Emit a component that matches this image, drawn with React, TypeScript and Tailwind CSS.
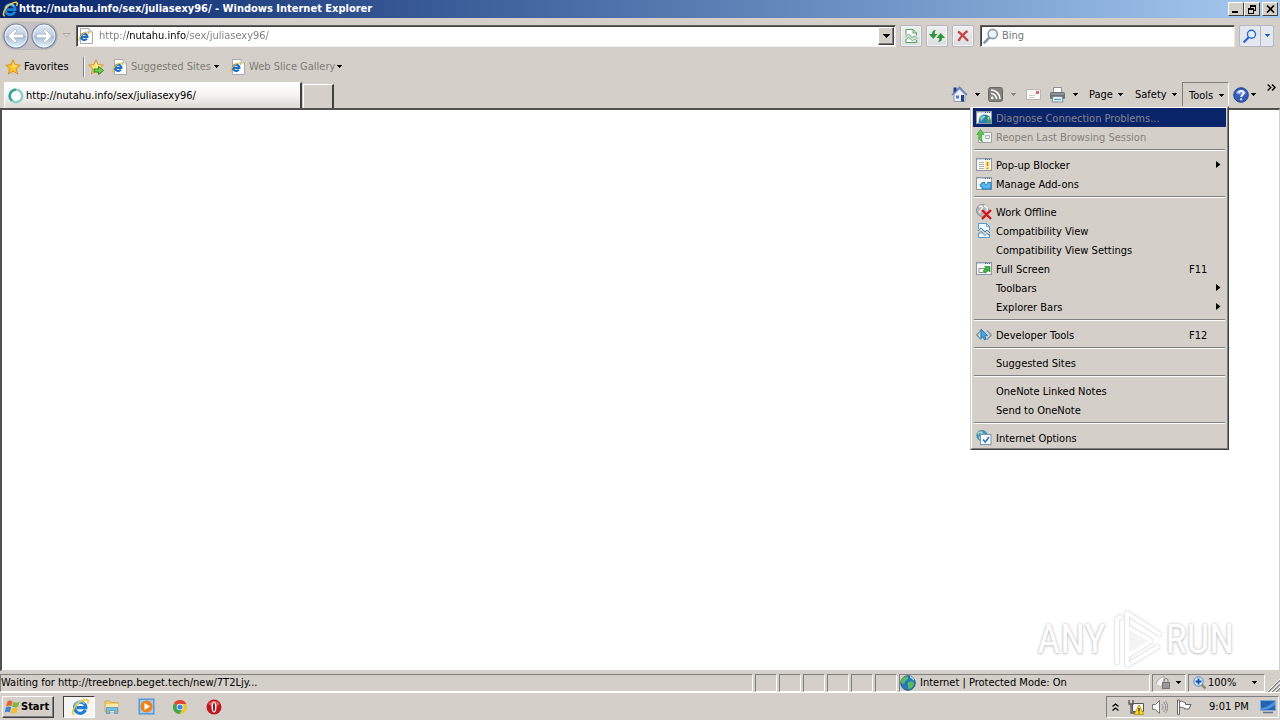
import React from "react";

type P = { children?: React.ReactNode };

const Caret = ({ color = "#000" }: { color?: string }) => (
  <svg width="5" height="3" viewBox="0 0 5 3" className="shrink-0" shapeRendering="crispEdges">
    <path d="M0 0h5v1H4v1H3v1H2V2H1V1H0z" fill={color} />
  </svg>
);

const IeGlyph = ({ size = 16 }: { size?: number }) => (
  <svg width={size} height={size} viewBox="0 0 16 16" className="shrink-0">
    <path d="M12.8 10.6A5 5 0 1 1 13.200 8.600H5" fill="none" stroke="#1d7fd6" strokeWidth="2.800" />
    <path d="M12.200 5.200A5 5 0 0 0 3.400 7" fill="none" stroke="#7fcdf8" strokeWidth="1.300" />
    <path d="M2.800 15C-.2 14 2.200 8.500 6 5S14.600.4 15.200 2.200c.2.800-.2 1.900-.6 2.800" fill="none" stroke="#f3c93c" strokeWidth="1.500" />
  </svg>
);

const IePage = () => (
  <svg width="16" height="16" viewBox="0 0 16 16" className="shrink-0">
    <path d="M2.500.5h8.500l3.500 3.500v11.500h-12z" fill="#fff" stroke="#a8a8a8" />
    <path d="M11 .5V4h3.500" fill="#e6e6e6" stroke="#b0b0b0" />
    <path d="M8.800 10.700A3.200 3.200 0 1 1 9.400 8.900H3" fill="none" stroke="#1d6fc4" strokeWidth="2.200" />
    <path d="M1.200 13C-.2 11.500 3 6.500 6.500 4.800s4.500-.6 4 1.200" fill="none" stroke="#e8b92e" strokeWidth="1.100" />
  </svg>
);

const Star = ({ add = false }: { add?: boolean }) => (
  <svg width="16" height="16" viewBox="0 0 16 16" className="shrink-0">
    <path d="M8 .8l2.100 4.900 5.200.5-3.900 3.500 1.200 5.300L8 12.200 3.400 15l1.200-5.300L.7 6.200l5.200-.5z" fill={add ? "#fbe27a" : "#fdc62c"} stroke="#d98a12" strokeWidth=".9" />
    <path d="M8 3l1.300 3.500 3 .3L8 8.500z" fill="#fff1a8" />
    {add && <path d="M6 10h4.500V7.500L15.500 11.500l-5 4V13H6z" fill="#6cd04e" stroke="#23841b" strokeWidth=".9" />}
  </svg>
);

const NavCircle = ({ flip = false }: { flip?: boolean }) => (
  <svg width="26" height="26" viewBox="0 0 26 26" className={flip ? "-scale-x-100" : ""}>
    <defs>
      <linearGradient id={flip ? "nf" : "nb"} x1="0" y1="0" x2="0" y2="1">
        <stop offset="0" stopColor="#e4e9f2" />
        <stop offset=".48" stopColor="#c2cfe2" />
        <stop offset=".52" stopColor="#a9bad6" />
        <stop offset="1" stopColor="#e6f8fe" />
      </linearGradient>
    </defs>
    <circle cx="13" cy="13" r="12" fill={flip ? "url(#nf)" : "url(#nb)"} stroke="#7788a4" strokeWidth="1.200" />
    <circle cx="13" cy="13" r="10.800" fill="none" stroke="#fff" strokeOpacity=".7" />
    <path d="M5 13l7-7 2 2-3 3.200H20.500v3.600H11l3 3.200-2 2z" fill="#fff" stroke="#95a5c2" strokeWidth=".6" />
  </svg>
);

const Windowed = ({ children }: P) => (
  <svg width="16" height="16" viewBox="0 1 16 16">
    <rect x=".5" y="2.500" width="15" height="12" fill="#f8f8f4" stroke="#8b98a8" />
    <path d="M1 3.500h14" stroke="#c8d2dc" />
    <path d="M9 3.500h1M11 3.500h1M13 3.500h1" stroke="#506480" />
    {children}
  </svg>
);

const menuIcons: Record<string, React.ReactNode> = {
  diagnose: (
    <Windowed>
      <path d="M2.500 14C2.500 8 5 5.500 9 5.500S15 9 15 14z" fill="#2f7fbe" />
      <path d="M4 9c2-3 4-3 5-2s-1 2-2 3-1 2-2 2z" fill="#7fd0b0" />
      <path d="M11 7.500h3v6.500h-3z" fill="#3da24a" />
      <path d="M12.500 8v2.500" stroke="#b8eb8a" strokeWidth="1.200" />
    </Windowed>
  ),
  reopen: (
    <svg width="16" height="16" viewBox="0 0 16 16">
      <path d="M6.500 3.500h9v10h-13v-5" fill="#f3f3ef" stroke="#9ca3a5" />
      <path d="M9.500 6.500h4v3h-4z" fill="none" stroke="#a7b8b9" />
      <path d="M6.500 12.500C3 11.500 2.700 9 3 5.500H1L4.500.5 8 5.500H5.700C5.500 9 5 10.500 6.500 12.500z" fill="#5ec850" stroke="#2c9b28" strokeWidth=".7" />
    </svg>
  ),
  popup: (
    <Windowed>
      <path d="M3 6.500h5M3 8.500h5M3 10.500h5M3 12.500h5" stroke="#b3b3b3" />
      <rect x="9" y="5" width="5" height="9" fill="#ffedb0" />
      <path d="M11.500 6v4M11.500 11.500v1.500" stroke="#d28b00" strokeWidth="1.600" />
    </Windowed>
  ),
  addons: (
    <Windowed>
      <path d="M6 14v-2.500c-2.500 1-2.500-3.500 0-2.500V7.500h3c-1 3 3 3 2.500 0H15V14z" fill="#58b9f0" stroke="#1874bc" strokeWidth=".9" />
    </Windowed>
  ),
  offline: (
    <svg width="16" height="16" viewBox="0 0 16 16">
      <circle cx="6.500" cy="6.500" r="6" fill="#b4b7b8" stroke="#8a8e90" />
      <path d="M3 3c3-2 4 0 3 2s-3 1-2 4M8 2c3 0 4 3 3 5" fill="none" stroke="#eee" strokeWidth="1.800" />
      <path d="M6 6l9 9M15 6l-9 9" stroke="#d9151b" strokeWidth="2.400" />
    </svg>
  ),
  compat: (
    <svg width="16" height="16" viewBox="0 0 16 16">
      <path d="M2.500 6V.5h8l3 3v4M2.500 11v3.500h11V11" fill="#eef8ff" stroke="#4a93c8" strokeWidth=".9" />
      <path d="M10.500.5v3h3" fill="none" stroke="#4a93c8" strokeWidth=".8" />
      <path d="M2 8l3-3 4 4 2-2 3 3M2 11.500l3-3 4 4 2-2 3 2.500" fill="none" stroke="#3387c1" />
    </svg>
  ),
  full: (
    <Windowed>
      <rect x="3" y="8.500" width="6" height="4" fill="#fff" stroke="#777" strokeWidth=".8" />
      <path d="M7 11l3-3-1.500-1.500H14V12l-1.500-1.500-3 2.500z" fill="#3eb53b" stroke="#177b1b" strokeWidth=".6" />
    </Windowed>
  ),
  dev: (
    <svg width="16" height="16" viewBox="0 0 16 16">
      <path d="M5 3.500L.7 8 5 12.500M11 3.500l4.300 4.500L11 12.500" fill="none" stroke="#7895a6" strokeWidth="1.200" />
      <path d="M5 2l6.500 6.500-2.800.3 1.500 3.400-1.700.8L7 9.800 5 11.500z" fill="#3caae8" stroke="#1c6dac" strokeWidth=".8" />
    </svg>
  ),
  options: (
    <svg width="16" height="16" viewBox="0 0 16 16">
      <circle cx="6" cy="5.500" r="5.300" fill="#3f9bd0" stroke="#4c7894" strokeWidth=".6" />
      <path d="M2 4c2-3 4-2 4 0S3 6 4 9" fill="none" stroke="#a6dcb0" strokeWidth="1.800" />
      <rect x="4.500" y="4.500" width="10.500" height="10" fill="#f8fcff" stroke="#7b95aa" />
      <path d="M7 9.500l2.300 2.500L13 7" fill="none" stroke="#2377c8" strokeWidth="1.500" />
    </svg>
  ),
};

type Item = { label: string; icon?: string; key?: string; sub?: boolean; state?: "hot" | "off" };
const menu: Item[][] = [
  [
    { label: "Diagnose Connection Problems...", icon: "diagnose", state: "hot" },
    { label: "Reopen Last Browsing Session", icon: "reopen", state: "off" },
  ],
  [{ label: "Pop-up Blocker", icon: "popup", sub: true }, { label: "Manage Add-ons", icon: "addons" }],
  [
    { label: "Work Offline", icon: "offline" },
    { label: "Compatibility View", icon: "compat" },
    { label: "Compatibility View Settings" },
    { label: "Full Screen", icon: "full", key: "F11" },
    { label: "Toolbars", sub: true },
    { label: "Explorer Bars", sub: true },
  ],
  [{ label: "Developer Tools", icon: "dev", key: "F12" }],
  [{ label: "Suggested Sites" }],
  [{ label: "OneNote Linked Notes" }, { label: "Send to OneNote" }],
  [{ label: "Internet Options", icon: "options" }],
];

const itemTone = {
  hot: "bg-[#0a246a] text-[#85858c]",
  off: "text-[#85827c]",
  normal: "text-black",
};

const ToolsMenu = () => (
  <div role="menu" className="absolute top-full right-0 z-10 -mt-px w-[259px] border border-t-[#d4d0c8] border-r-[#404040] border-b-[#404040] border-l-[#d4d0c8] bg-[#d4cfc8]">
    <div className="border border-t-white border-r-[#808080] border-b-[#808080] border-l-white px-px pb-px">
      {menu.map((group, g) => (
        <div key={g}>
          {g > 0 && (
            <div role="separator" className="h-[9px] px-px pt-[3px]">
              <div className="h-px bg-[#808080]" />
              <div className="h-px bg-white" />
            </div>
          )}
          {group.map((it) => (
            <button key={it.label} role="menuitem" disabled={it.state !== undefined} className={`flex h-[19px] w-full items-center pr-1 pl-[3px] text-left ${itemTone[it.state ?? "normal"]}`}>
              <span className="w-5 shrink-0">{it.icon && menuIcons[it.icon]}</span>
              <span className="grow pt-[2px]">{it.label}</span>
              {it.key && <span className="w-[33px] pt-[2px]">{it.key}</span>}
              {it.sub && (
                <svg width="5" height="7" viewBox="0 0 5 7" className="mr-px">
                  <path d="M0 0l4.500 3.500L0 7z" />
                </svg>
              )}
            </button>
          ))}
        </div>
      ))}
    </div>
  </div>
);

const WinButton = ({ label, children }: { label: string } & P) => (
  <button aria-label={label} className="flex h-[14px] w-4 items-center justify-center border border-t-white border-r-[#404040] border-b-[#404040] border-l-white bg-[#d4d0c8]">
    {children}
  </button>
);

const SoftButton = ({ label, children }: { label: string } & P) => (
  <button aria-label={label} className="flex h-[22px] w-[22px] items-center justify-center rounded-xs border border-[#b4b8be] bg-linear-to-b from-[#eeeeee] to-[#dcdfe3] shadow-[inset_0_0_0_1px_#f4f4f4]">
    {children}
  </button>
);

const Pane = ({ className = "", children }: { className?: string } & P) => (
  <div className={`flex h-[18px] shrink-0 items-center border border-t-[#808080] border-r-white border-b-white border-l-[#808080] ${className}`}>{children}</div>
);

const Magnifier = ({ size, color, fill }: { size: number; color: string; fill: string }) => (
  <svg width={size} height={size} viewBox="0 0 16 16" className="shrink-0">
    <path d="M6.500 9.500L1.500 14.500" stroke={color} strokeWidth="2.600" strokeLinecap="round" />
    <circle cx="9.700" cy="6" r="4.600" fill={fill} stroke={color} strokeWidth="1.600" />
  </svg>
);

const Globe = () => (
  <svg width="16" height="16" viewBox="0 0 16 16" className="shrink-0">
    <circle cx="8" cy="8" r="7.300" fill="#2478bd" stroke="#315f7c" />
    <path d="M4 2c3-1 5 0 4 2S5 5 5 7s-2 2-3.500 1S2 3 4 2zM9 7c3-1 5 0 5 2s-3 5-5 5 0-3-1-4 0-3 1-3z" fill="#57bb5b" />
    <path d="M10 2c2 0 3 2 4 3" stroke="#b5e3fa" strokeWidth="1.400" fill="none" />
  </svg>
);

const TitleBar = () => (
  <header className="flex h-[18px] shrink-0 items-center gap-px bg-linear-to-r from-[#0a246a] to-[#a6caf0] pr-[2px] pl-[2px] text-white">
    <IeGlyph />
    <h1 className="grow text-[11px] font-bold">http://nutahu.info/sex/juliasexy96/ - Windows Internet Explorer</h1>
    <div className="flex">
      <WinButton label="Minimize">
        <svg width="10" height="9"><path d="M1 6h6v2H1z" /></svg>
      </WinButton>
      <WinButton label="Restore">
        <svg width="10" height="9" viewBox="0 0 10 9" shapeRendering="crispEdges"><path d="M3 0h6v6H7V5h1V2H4v1H3zM1 3h6v6H1zm1 2v3h4V5z" fillRule="evenodd" /></svg>
      </WinButton>
    </div>
    <div className="ml-px flex">
      <WinButton label="Close">
        <svg width="9" height="8" viewBox="0 0 9 8"><path d="M1 .5l7 7M8 .5l-7 7" stroke="#000" strokeWidth="1.700" /></svg>
      </WinButton>
    </div>
  </header>
);

const inset = "border border-t-[#606060] border-r-[#e8e6e2] border-b-[#f4f2ee] border-l-[#606060] shadow-[inset_1px_1px_0_#404040]";

const AddressRow = () => (
  <div className="flex h-[35px] shrink-0 items-center pr-[6px] pl-[3px]">
    <div className="flex rounded-full bg-[#c4c2c4] shadow-[0_0_0_1px_#bdb9b6]">
      <button aria-label="Back"><NavCircle /></button>
      <button aria-label="Forward" className="ml-[2px]"><NavCircle flip /></button>
    </div>
    <button aria-label="Recent pages" className="flex w-[19px] justify-center">
      <svg width="9" height="5" viewBox="0 0 9 5"><path d="M1 .5h7L4.500 4z" fill="#ddd8d1" stroke="#aaa69f" /></svg>
    </button>
    <div className={`flex h-[22px] grow items-center bg-white px-px ${inset}`}>
      <IePage />
      <input aria-label="Address" defaultValue="http://nutahu.info/sex/juliasexy96/" className="h-5 min-w-0 grow bg-[linear-gradient(90deg,#7c7c7c_33px,#000_33px,#000_92px,#7c7c7c_92px)] bg-clip-text pl-[5px] text-transparent outline-none" />
      <button aria-label="Show addresses" className="flex h-[18px] w-4 items-center justify-center border border-t-white border-r-[#404040] border-b-[#404040] border-l-white bg-[#d4d0c8] shadow-[inset_-1px_-1px_0_#808080]">
        <svg width="7" height="4" viewBox="0 0 7 4" shapeRendering="crispEdges"><path d="M0 0h7v1H6v1H5v1H4v1H3V3H2V2H1V1H0z" /></svg>
      </button>
    </div>
    <div className="mr-[6px] ml-1 flex gap-1">
      <SoftButton label="Compatibility View">
        <svg width="16" height="16" viewBox="0 0 16 16" className="shrink-0">
          <path d="M3 6.500V1.500h7l3.500 3.500v2.500M3 11.500v3h10.500V12" fill="#fff" stroke="#4ba456" />
          <path d="M10 1.500V5h3.500" fill="none" stroke="#4ba456" />
          <path d="M2.500 9l3-3 4 4L11.500 8l3 3M2.500 12l3-3 4 4 2-2 2.500 2.500" fill="none" stroke="#5cae66" />
        </svg>
      </SoftButton>
      <SoftButton label="Refresh">
        <svg width="18" height="16" viewBox="0 0 18 16" className="shrink-0">
          <path d="M8 2C5 2 4 3.500 4 6H1l4.300 5L9.500 6H6.700c0-1.700.3-3 1.300-4z" fill="#2f9438" />
          <path d="M10 14c3 0 4-1.500 4-4h3l-4.300-5L8.500 10h2.800c0 1.700-.3 3-1.300 4z" fill="#2f9438" />
        </svg>
      </SoftButton>
      <SoftButton label="Stop">
        <svg width="14" height="14" viewBox="0 0 14 14"><path d="M2 2.500c3 2 7 6 10 9.500M11.500 2C8 4.500 4.500 8 2.500 12" fill="none" stroke="#cb4545" strokeWidth="2.200" /></svg>
      </SoftButton>
    </div>
    <div className={`flex h-[22px] w-[255px] items-center bg-white pl-[2px] ${inset}`}>
      <Magnifier size={16} color="#8797ad" fill="#e9f4fb" />
      <input aria-label="Search" placeholder="Bing" className="h-5 min-w-0 grow pl-[3px] outline-none placeholder:text-[#777]" />
    </div>
    <div className="ml-1 flex h-[22px] rounded-xs border border-[#b4b8c4] bg-[#e4e7ed]">
      <button aria-label="Search the web" className="flex w-5 items-center justify-center"><Magnifier size={14} color="#2b67cf" fill="#e2f0ff" /></button>
      <button aria-label="Search options" className="flex w-[13px] items-center justify-center border-l border-[#b4b8c4]"><Caret color="#2460bd" /></button>
    </div>
  </div>
);

const FavoritesRow = () => (
  <div className="flex h-[27px] shrink-0 items-center pl-[5px]">
    <button className="flex w-[78px] items-center gap-[3px]"><Star />Favorites</button>
    <div className="h-5 w-[2px] border-l border-[#808080] bg-white" />
    <button aria-label="Add to Favorites Bar" className="ml-[3px]"><Star add /></button>
    <button className="ml-2 flex w-[118px] items-center text-[#7e7b76]">
      <IePage /><span className="w-[86px] pl-[3px] text-left">Suggested Sites</span><Caret />
    </button>
    <button className="flex items-center text-[#7e7b76]">
      <IePage /><span className="w-[91px] pl-[3px] text-left">Web Slice Gallery</span><Caret />
    </button>
  </div>
);

const House = () => (
  <svg width="17" height="17" viewBox="0 0 17 17">
    <path d="M3 8.500v7h11v-7L8.500 3z" fill="#edf2fa" stroke="#8d9ab4" />
    <path d="M1 9l7.500-7.500L16 9" fill="none" stroke="#6a80b4" strokeWidth="1.600" />
    <path d="M2.500 1.500h3v3l-3 2.500z" fill="#203a86" />
    <rect x="5" y="9.500" width="3" height="3" fill="#4a7ecb" /><rect x="10" y="9" width="3" height="6.500" fill="#25428b" />
  </svg>
);
const Rss = () => (
  <svg width="15" height="15" viewBox="0 0 15 15">
    <rect x=".5" y=".5" width="14" height="14" rx="2" fill="#85827e" stroke="#6c6965" />
    <circle cx="4.200" cy="10.900" r="1.300" fill="#fff" />
    <path d="M3 6.500a5.500 5.500 0 0 1 5.500 5.500M3 3a9 9 0 0 1 9 9" fill="none" stroke="#fff" strokeWidth="1.500" />
  </svg>
);
const Mail = () => (
  <svg width="15" height="11" viewBox="0 0 15 11">
    <rect x=".5" y=".5" width="14" height="10" fill="#faf8f7" stroke="#bdb6b4" />
    <rect x="10" y="2" width="3" height="3" fill="#d8646c" /><path d="M3 6.500h6M3 8.500h5" stroke="#cfcac8" />
  </svg>
);
const Printer = () => (
  <svg width="17" height="16" viewBox="0 0 17 16">
    <path d="M4.500 6V.5h8V6" fill="#fff" stroke="#8b8f95" />
    <rect x="1" y="5" width="15" height="7" rx="1.500" fill="#6d7075" /><path d="M2 7h13" stroke="#aeb1b5" />
    <path d="M4 9.500h9l1 5.500H3z" fill="#f2f7fb" stroke="#7a8c9b" /><path d="M5 12.500h7" stroke="#57a4d4" strokeWidth="1.500" />
  </svg>
);
const Help = () => (
  <svg width="16" height="16" viewBox="0 0 16 16">
    <circle cx="8" cy="8" r="7.300" fill="#345db7" stroke="#24458d" />
    <path d="M2.500 6a6 5 0 0 1 11 0C10 8 6 8 2.500 6z" fill="#7e9fe0" />
    <path d="M5.500 6.200c0-3.200 5.200-3 5.200 0C10.700 8 8.200 8 8.200 10M8.200 11.300v1.900" fill="none" stroke="#fff" strokeWidth="1.800" />
  </svg>
);

const TabRow = () => (
  <div className="flex h-[28px] shrink-0 justify-between pl-1">
    <div className="flex items-end gap-px">
      <button role="tab" aria-selected="true" className="flex h-[26px] w-[298px] items-center border-t border-r-2 border-l border-t-white border-r-[#404040] border-l-white bg-linear-to-b from-white via-[#f4f3f1] to-[#dedad4] pt-px pl-[3px]">
        <svg width="16" height="16" viewBox="0 0 16 16" className="mr-[2px]">
          <circle cx="8" cy="8" r="6.200" fill="#fff" stroke="#8fd0c6" strokeWidth="2.600" />
          <path d="M8 1.800A6.200 6.200 0 0 0 4 12.800" fill="none" stroke="#3ba698" strokeWidth="2.600" />
        </svg>
        http://nutahu.info/sex/juliasexy96/
      </button>
      <button aria-label="New Tab" className="h-[24px] w-[31px] border-t border-r-2 border-l border-t-white border-r-[#404040] border-l-white" />
    </div>
    <div className="flex h-[26px] items-center self-end pb-px">
      <button aria-label="Home" className="flex w-[37px] items-center gap-[7px]"><House /><Caret /></button>
      <button aria-label="Feeds" disabled className="flex w-[38px] items-center gap-2"><Rss /><Caret color="#8c8882" /></button>
      <button aria-label="Read mail" className="w-[23px]"><Mail /></button>
      <button aria-label="Print" className="flex w-10 items-center gap-[7px]"><Printer /><Caret /></button>
      <button className="flex w-[46px] items-center"><span className="w-[29px] text-left">Page</span><Caret /></button>
      <button className="flex w-[47px] items-center"><span className="w-[37px] text-left">Safety</span><Caret /></button>
      <div className="relative">
        <button aria-haspopup="menu" aria-expanded="true" className="flex h-[25px] w-[47px] items-center border border-t-[#808080] border-r-white border-b-transparent border-l-[#808080] pt-[2px] pl-[6px]"><span className="w-[30px] text-left">Tools</span><Caret /></button>
        <ToolsMenu />
      </div>
      <button aria-label="Help" className="ml-1 flex w-[34px] items-center gap-[2px]"><Help /><Caret /></button>
      <button aria-label="More commands" className="self-start pt-[2px] pr-1">
        <svg width="9" height="7" viewBox="0 0 9 7"><path d="M.7.5l3 3-3 3M5 .5l3 3-3 3" fill="none" stroke="#000" strokeWidth="1.400" /></svg>
      </button>
    </div>
  </div>
);

const StatusBar = () => (
  <footer className="flex h-[22px] shrink-0 items-center gap-[2px] border-b border-white pt-[2px]">
    <Pane className="grow">Waiting for http://treebnep.beget.tech/new/7T2Ljy...</Pane>
    {[0, 1, 2, 3, 4, 5].map((n) => <Pane key={n} className="w-[22px]" />)}
    <Pane className="w-[251px] gap-1"><Globe />Internet | Protected Mode: On</Pane>
    <Pane className="w-[34px] gap-[5px] pl-[2px]">
      <svg width="16" height="15" viewBox="0 0 16 15">
        <path d="M1 9C2 5 5 3 9 1v9l-3 1" fill="#f1f1f1" stroke="#aaa" />
        <rect x="7.500" y="7.500" width="7" height="6" fill="#999" stroke="#777" /><path d="M9 7V5.500a2 2 0 0 1 4 0V7" fill="none" stroke="#888" />
      </svg>
      <Caret />
    </Pane>
    <Pane className="w-[77px] pl-1">
      <svg width="14" height="14" viewBox="0 0 14 14" className="mr-px">
        <path d="M8.500 8.500l4 4" stroke="#8b8074" strokeWidth="2.400" />
        <circle cx="5.500" cy="5.500" r="4.700" fill="#d7edfc" stroke="#4d83bf" /><path d="M5.500 2.500v6M2.500 5.500h6" stroke="#1553a8" strokeWidth="1.800" />
      </svg>
      <span className="w-11">100%</span><Caret />
    </Pane>
    <svg width="13" height="14" viewBox="0 0 13 14" className="self-end">
      <path d="M1 14L13 2M5 14l8-8M9 14l4-4" stroke="#808080" strokeWidth="1.500" /><path d="M0 14L13 1M4 14l9-9M8 14l5-5" stroke="#fff" />
    </svg>
  </footer>
);

const Taskbar = () => (
  <nav className="flex h-[27px] shrink-0 items-center pr-px pl-[2px]">
    <button className="flex h-[22px] w-[52px] items-center border border-t-white border-r-[#404040] border-b-[#404040] border-l-white pl-[2px] font-bold shadow-[inset_-1px_-1px_0_#808080]">
      <svg width="16" height="16" viewBox="0 0 16 16">
        <path d="M2.500 2.500C4.500 1 6 1.500 7.500 2.500L6.300 7.300C4.500 6.300 3 6.300 1 7.500z" fill="#e8602b" />
        <path d="M8.500 3c2 1 4 1 6-.5l-1.200 5c-2 1.300-4 1.300-6 .2z" fill="#7cb83c" />
        <path d="M.8 8.500c2-1.200 3.500-1.200 5.300-.2l-1.300 5C3 12.300 1.500 12.500-.3 13.500z" fill="#3f83d6" />
        <path d="M7 8.700c2 1.100 4 1.100 6-.2l-1.200 5c-2 1.300-4 1.300-6 .2z" fill="#f4bd2c" />
      </svg>
      Start
    </button>
    <div className="ml-[9px] flex items-center">
      <button aria-label="Internet Explorer" className="flex h-[22px] w-8 items-center justify-center border border-t-[#404040] border-r-white border-b-white border-l-[#404040] bg-[#f6f5f3] pl-px"><IeGlyph size={18} /></button>
      <button aria-label="Windows Explorer" className="flex w-[34px] justify-center">
        <svg width="16" height="16" viewBox="0 0 16 16">
          <path d="M1 2h5l1 1.500h7V13H1z" fill="#edcd6a" stroke="#c7a440" strokeWidth=".7" /><path d="M2 5h12v8H2z" fill="#f9eaa6" />
          <path d="M2.500 14.500V8.500h11v6h-3v-3h-5v3z" fill="#79b9e6" stroke="#4b8fc4" strokeWidth=".7" />
        </svg>
      </button>
      <button aria-label="Windows Media Player" className="flex w-[34px] justify-center">
        <svg width="17" height="17" viewBox="0 0 17 17">
          <rect x=".5" y=".5" width="16" height="16" fill="#5b9bdc" stroke="#8fb4da" /><rect x="2" y="2" width="13" height="13" fill="#a2cbf1" />
          <circle cx="8.500" cy="8.500" r="6" fill="#f08114" /><path d="M6.500 5l5.500 3.500L6.500 12z" fill="#fff" />
        </svg>
      </button>
      <button aria-label="Chrome" className="flex w-[34px] justify-center">
        <svg width="16" height="16" viewBox="0 0 16 16">
          <circle cx="8" cy="8" r="7" fill="#e9c52f" />
          <path d="M8 8L1.900 4.500A7 7 0 0 0 7.500 15l3-5.500z" fill="#37a552" /><path d="M2 4.300A7 7 0 0 1 14.300 5H8v3z" fill="#dc4536" />
          <circle cx="8" cy="8" r="3.300" fill="#fff" /><circle cx="8" cy="8" r="2.600" fill="#4285e4" />
        </svg>
      </button>
      <button aria-label="Opera" className="flex w-[34px] justify-center">
        <svg width="16" height="16" viewBox="0 0 16 16"><circle cx="8" cy="8" r="7.500" fill="#bd1720" /><path d="M2 5a7 6 0 0 1 12 0C10 8 6 8 2 5z" fill="#e0575b" /><ellipse cx="8" cy="8" rx="2.500" ry="5.500" fill="#fff" /><ellipse cx="8" cy="8" rx="1" ry="4.600" fill="#961018" /></svg>
      </button>
    </div>
    <div className="ml-auto flex h-[22px] w-[173px] items-center border border-t-[#808080] border-r-white border-b-white border-l-[#808080] pr-[2px] pl-[5px]">
      <button aria-label="Show hidden icons" className="w-4">
        <svg width="7" height="8" viewBox="0 0 7 8"><path d="M.5 3.500l3-2.500 3 2.500M.5 7.500l3-2.500 3 2.500" fill="none" stroke="#000" strokeWidth="1.300" /></svg>
      </button>
      <svg width="16" height="16" viewBox="0 0 16 16" className="mr-2">
        <path d="M4.500 4.500h11v8h-11z" fill="#f4f4f4" stroke="#555" /><path d="M6 14.500h8" stroke="#555" />
        <path d="M1 1v4h4V1M3 5v9h4" fill="none" stroke="#555" strokeWidth="1.300" />
        <path d="M11 6l4.700 9.500H6.300z" fill="#ffda22" stroke="#aa8b0c" strokeWidth=".7" /><path d="M11 9v3.500M11 13.500v1" stroke="#222" strokeWidth="1.200" />
      </svg>
      <svg width="16" height="16" viewBox="0 0 16 16" className="mr-2">
        <path d="M.5 5.500h3l4-4v13l-4-4h-3z" fill="#fafafa" stroke="#777" /><path d="M9.500 5c2 2 2 4 0 6M11.500 3c3 3 3 7 0 10M13.500 2c3 4 3 8 0 12" fill="none" stroke="#888" />
      </svg>
      <svg width="16" height="16" viewBox="0 0 16 16">
        <path d="M1.500 1v14.500h2V1z" fill="#fff" stroke="#666" /><path d="M3.500 2.500c3-1 4 1 6 1v2h5.500l-2 4.500H8.500V9c-2 0-3-1.500-5-.5z" fill="#fff" stroke="#666" />
      </svg>
      <time className="ml-[17px]">9:01 PM</time>
      <button aria-label="Show desktop" className="ml-auto">
        <svg width="16" height="14" viewBox="0 0 16 14"><path d="M.5.5h15v10H.5z" fill="#2363b5" stroke="#87a9cf" /><path d="M1 8C6 8 10 5 15 1v4c-4 3-8 5-14 5z" fill="#4f94dd" /><path d="M3 12.500h10" stroke="#5d7590" strokeWidth="1.500" /></svg>
      </button>
    </div>
  </nav>
);

const Watermark = () => (
  <div className="pointer-events-none absolute right-[45px] -bottom-[3px] flex h-[66px] items-center text-[40px] leading-none text-white [font-family:'Liberation_Sans_Narrow','Roboto_Condensed','Liberation_Sans',sans-serif] [text-shadow:0_0_3px_#bbb,0_1px_2px_#ccc]">
    <span>ANY</span>
    <svg width="60" height="64" viewBox="0 0 60 64" className="[filter:drop-shadow(0_0_1px_#bbb)]">
      <path d="M11 56V11l5-3" fill="none" stroke="#fff" strokeWidth="4" />
      <path d="M21 57V5l34 22M21 19l24 14-24 15M20 58l33-20" fill="none" stroke="#fff" strokeWidth="4" strokeLinejoin="round" />
      <path d="M23 22v23l19-12z" fill="#f4f4f4" />
    </svg>
    <span>RUN</span>
  </div>
);

export default function App() {
  return (
    <div className="flex h-screen flex-col overflow-hidden bg-[#d4cfc8] text-[11px] leading-[14px] whitespace-nowrap text-black [font-family:Tahoma,'DejaVu_Sans_Condensed','DejaVu_Sans',sans-serif]">
      <TitleBar />
      <AddressRow />
      <FavoritesRow />
      <TabRow />
      <main className="relative min-h-0 grow border-t-2 border-r border-b border-l-2 border-t-[#505050] border-r-[#d4cfc8] border-b-[#d4cfc8] border-l-[#505050] bg-white">
        <Watermark />
      </main>
      <StatusBar />
      <Taskbar />
    </div>
  );
}
